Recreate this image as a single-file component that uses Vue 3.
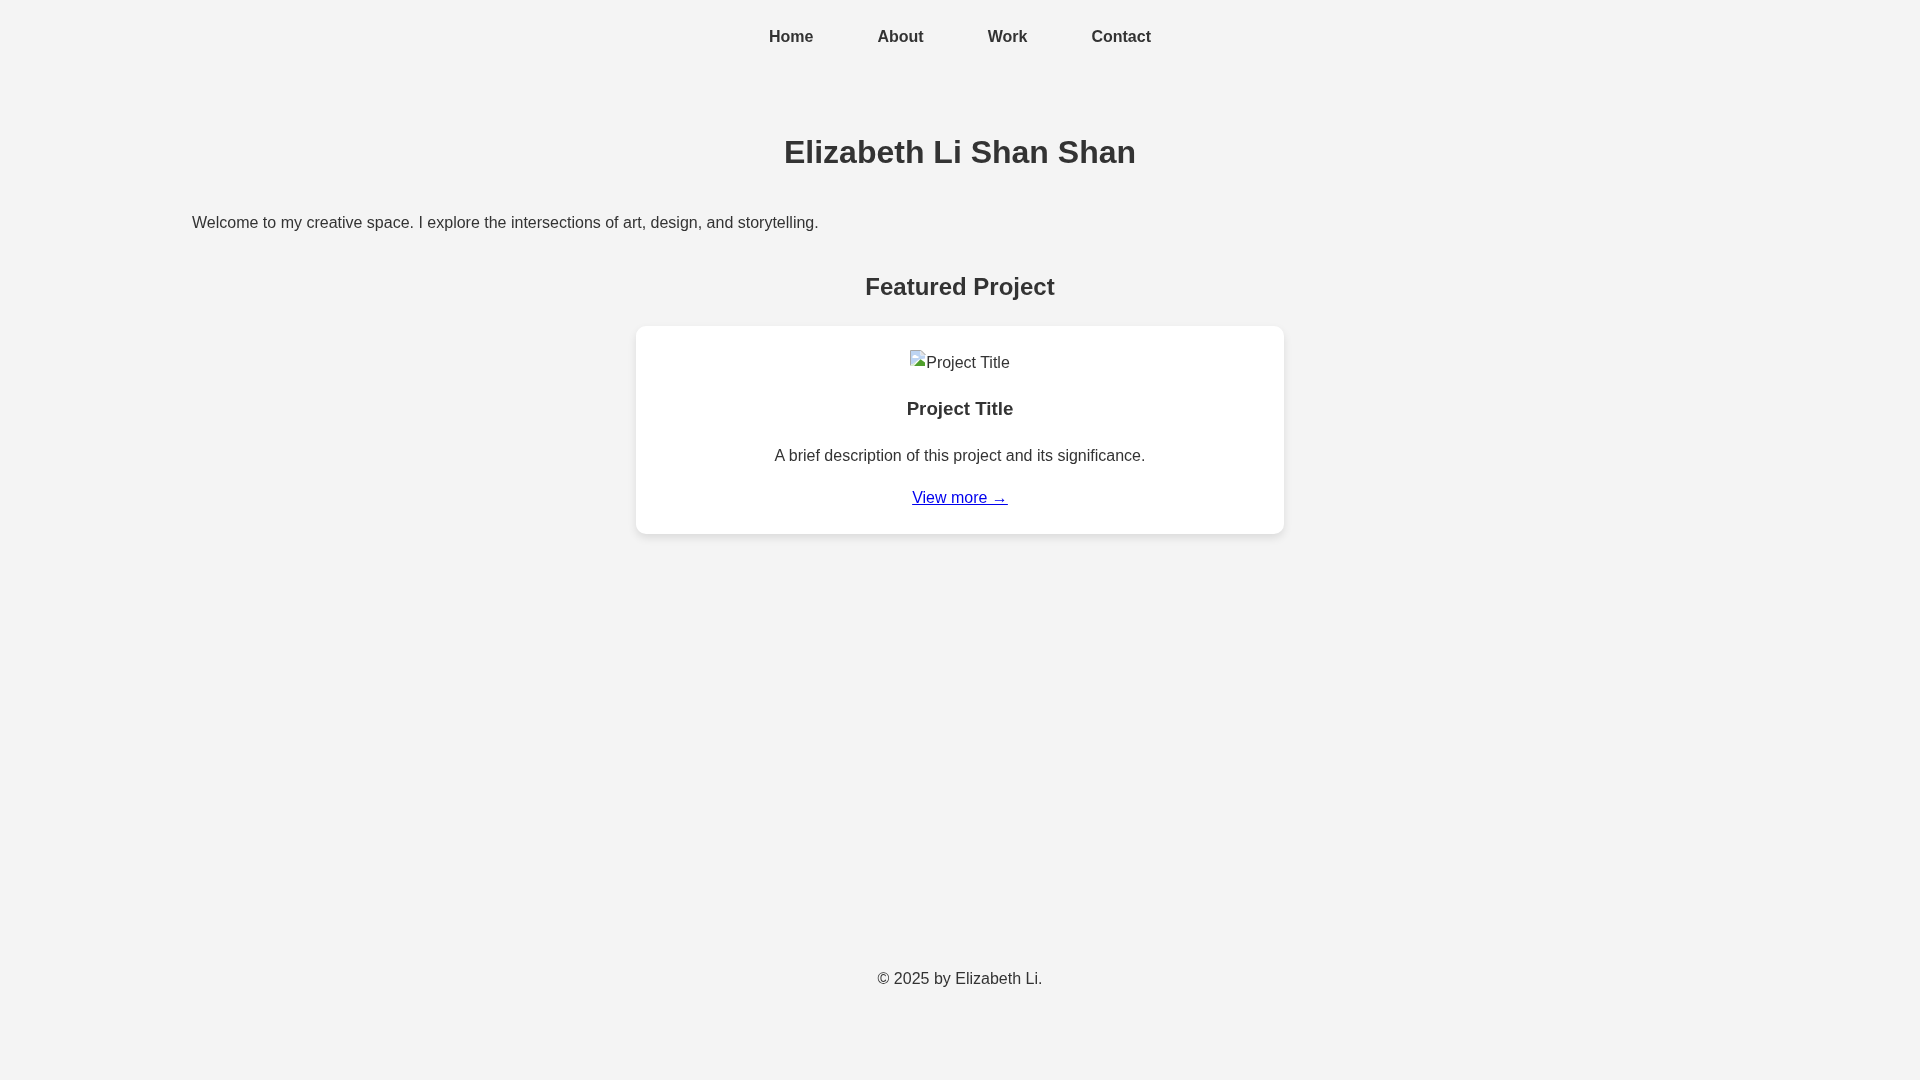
<script setup>
const links = ['Home', 'About', 'Work', 'Contact']
</script>

<template>
  <div class="page">
    <nav class="nav">
      <a v-for="link in links" :key="link" href="#">{{ link }}</a>
    </nav>
    <header class="hero">
      <h1>Elizabeth Li Shan Shan</h1>
    </header>
    <main class="content">
      <p class="intro">Welcome to my creative space. I explore the intersections of art, design, and storytelling.</p>
      <h2>Featured Project</h2>
      <article class="card">
        <div class="thumb">
          <svg class="broken" width="16" height="16" viewBox="0 0 16 16" aria-hidden="true">
            <path d="M0 0H11L16 5V16H0Z" fill="#fff" />
            <path d="M0.5 15.5V0.5H10.8" fill="none" stroke="#a8a8a8" />
            <path d="M1 1H10.5V5.5H15V8.5L9 9.5L3 14L1 14.5Z" fill="#bdd4f2" />
            <path d="M2.5 6.5C3.5 4.5 6 4.5 7 6.2H8.5V8H2.5Z" fill="#fff" />
            <path d="M1 16V14.5L3 14L7 11L3.5 16Z" fill="#d8ecd0" />
            <path d="M4 16L10.5 9.2L15 12.5V16Z" fill="#4f9f2c" />
            <path d="M11 0V5H16Z" fill="#e2e2e2" />
            <path d="M11 0.5L15.5 5" fill="none" stroke="#a8a8a8" />
          </svg><span>Project Title</span>
        </div>
        <h3>Project Title</h3>
        <p>A brief description of this project and its significance.</p>
        <a class="more" href="#">View more →</a>
      </article>
    </main>
    <footer class="footer">
      <p>© 2025 by Elizabeth Li.</p>
    </footer>
  </div>
</template>

<style>
  body{
    margin: 0;
    background: #f4f4f4;
  }
</style>

<style scoped>
  .page{
    min-height: 1080px;
    font-family: "Liberation Sans", Arial, sans-serif;
    font-size: 16px;
    color: #333;
    text-align: center;
    display: flex;
    flex-direction: column;
    /* own layer, text comes out with grey antialiasing like the reference */
    will-change: transform;
  }

  .nav{
    display: flex;
    justify-content: center;
    gap: 64px;
    padding: 28px 0 0;
    line-height: 18px;
  }

  .nav a{
    font-weight: bold;
    color: #333;
    text-decoration: none;
  }

  .hero{
    padding-top: 82px;
  }

  h1{
    margin: 0;
    font-size: 32px;
    line-height: 48px;
  }

  .content{
    padding: 0 192px;
    flex: 1;
  }

  .intro{
    margin: 37px 0 0;
    text-align: left;
    line-height: 20px;
  }

  h2{
    margin: 39px 0 0;
    font-size: 24px;
    line-height: 30px;
  }

  .card{
    width: 600px;
    margin: 24px auto 0;
    padding: 24px 24px 26px;
    background: #fff;
    border-radius: 10px;
    box-shadow: 0 4px 8px rgba(0, 0, 0, 0.1);
  }

  .thumb{
    display: flex;
    justify-content: center;
    align-items: flex-start;
    line-height: 20px;
  }

  .thumb span{
    margin-top: 3px;
  }

  .broken{
    flex: none;
  }

  h3{
    margin: 25px 0 0;
    font-size: 18.72px;
    line-height: 22px;
  }

  .card p{
    margin: 26px 0 0;
    line-height: 20px;
  }

  .more{
    display: block;
    width: fit-content;
    margin: 22px auto 0;
    color: #0000ee;
    line-height: 20px;
  }

  .footer p{
    margin: 0 0 91px;
    line-height: 20px;
  }
</style>
